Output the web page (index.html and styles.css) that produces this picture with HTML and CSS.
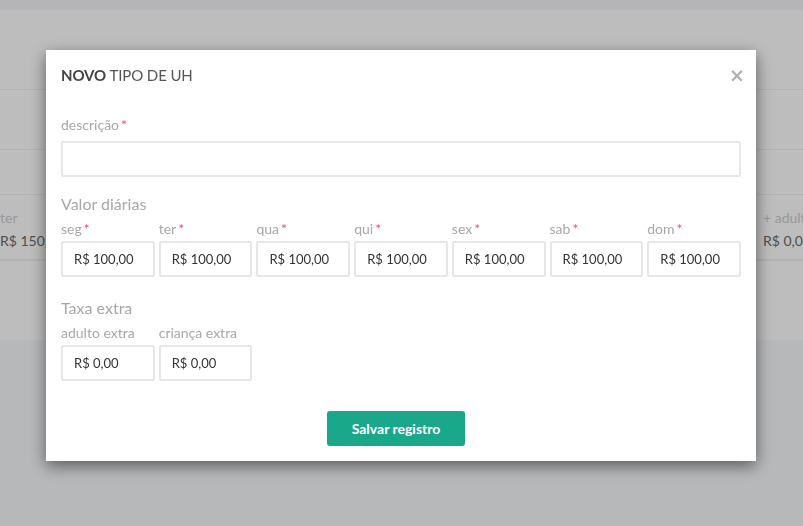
FILE: index.html
```html
<!DOCTYPE html>
<html lang="pt-BR">

<head>
    <meta charset="UTF-8">
    <meta name="viewport" content="width=device-width, initial-scale=1.0">
    <title>Tipos de UH</title>
    <link rel="stylesheet" href="styles.css">
</head>

<body>
    <div class="topbar"></div>
    <div class="page">
        <div class="row row-a"></div>
        <div class="row row-b"></div>
        <div class="row row-c"></div>
        <div class="row row-prices">
            <div class="cell">
                <span class="cell-label">ter</span>
                <span class="cell-value">R$ 150,00</span>
            </div>
            <div class="cell">
                <span class="cell-label">qua</span>
                <span class="cell-value">R$ 150,00</span>
            </div>
            <div class="cell">
                <span class="cell-label">qui</span>
                <span class="cell-value">R$ 150,00</span>
            </div>
            <div class="cell">
                <span class="cell-label">sex</span>
                <span class="cell-value">R$ 150,00</span>
            </div>
            <div class="cell">
                <span class="cell-label">sab</span>
                <span class="cell-value">R$ 150,00</span>
            </div>
            <div class="cell">
                <span class="cell-label">dom</span>
                <span class="cell-value">R$ 150,00</span>
            </div>
            <div class="cell">
                <span class="cell-label">+ adulto</span>
                <span class="cell-value">R$ 0,00</span>
            </div>
        </div>
        <div class="row row-d"></div>
    </div>

    <div class="backdrop"></div>

    <div class="modal">
        <div class="modal-header">
            <h4 class="modal-title"><b>NOVO</b> TIPO DE UH</h4>
            <button class="close">&times;</button>
        </div>
        <div class="modal-body">
            <div class="field">
                <label>descrição<span class="req">*</span></label>
                <input type="text" class="input">
            </div>

            <h5 class="section">Valor diárias</h5>
            <div class="days">
                <div class="field">
                    <label>seg<span class="req">*</span></label>
                    <input type="text" class="input" value="R$ 100,00">
                </div>
                <div class="field">
                    <label>ter<span class="req">*</span></label>
                    <input type="text" class="input" value="R$ 100,00">
                </div>
                <div class="field">
                    <label>qua<span class="req">*</span></label>
                    <input type="text" class="input" value="R$ 100,00">
                </div>
                <div class="field">
                    <label>qui<span class="req">*</span></label>
                    <input type="text" class="input" value="R$ 100,00">
                </div>
                <div class="field">
                    <label>sex<span class="req">*</span></label>
                    <input type="text" class="input" value="R$ 100,00">
                </div>
                <div class="field">
                    <label>sab<span class="req">*</span></label>
                    <input type="text" class="input" value="R$ 100,00">
                </div>
                <div class="field">
                    <label>dom<span class="req">*</span></label>
                    <input type="text" class="input" value="R$ 100,00">
                </div>
            </div>

            <h5 class="section section-extra">Taxa extra</h5>
            <div class="days">
                <div class="field">
                    <label>adulto extra</label>
                    <input type="text" class="input" value="R$ 0,00">
                </div>
                <div class="field">
                    <label>criança extra</label>
                    <input type="text" class="input" value="R$ 0,00">
                </div>
            </div>

            <div class="actions">
                <button class="btn-save">Salvar registro</button>
            </div>
        </div>
    </div>
</body>

</html>
```

FILE: styles.css
```css
* {
    margin: 0;
    padding: 0;
    box-sizing: border-box;
}

body {
    background-color: #f7f8fa;
    font-family: Lato, "Liberation Sans", sans-serif;
    overflow: hidden;
    height: 526px;
}

/* page behind the modal */
.topbar {
    height: 10px;
    background-color: #f4f5f8;
}

.page {
    background-color: #fff;
    height: 330px;
    overflow: hidden;
}

.row {
    border-bottom: 1px solid #f1f1f2;
}

.row-a {
    height: 80px;
}

.row-b {
    height: 60px;
}

.row-c {
    height: 45px;
}

.row-prices {
    height: 65px;
    display: flex;
    overflow: hidden;
}

.cell {
    flex: 0 0 127px;
    padding-top: 14px;
    display: flex;
    flex-direction: column;
    gap: 6px;
    font-size: 14px;
    white-space: nowrap;
}

.cell:last-child {
    padding-left: 1px;
}

.cell-label {
    color: #cdcdcd;
}

.cell-value {
    color: #6a6a6a;
}

.backdrop {
    position: fixed;
    inset: 0;
    background-color: rgba(0, 0, 0, 0.26);
}

/* modal */
.modal {
    position: fixed;
    top: 50px;
    left: 46px;
    width: 710px;
    background-color: #fff;
    box-shadow: 0 5px 15px rgba(0, 0, 0, 0.5);
}

.modal-header {
    display: flex;
    justify-content: space-between;
    align-items: center;
    padding: 15px;
    height: 50px;
}

.modal-title {
    font-size: 15px;
    font-weight: 400;
    color: #555;
    line-height: 20px;
    letter-spacing: -0.1px;
}

.modal-title b {
    font-weight: 700;
    color: #444;
}

.close {
    border: none;
    background: none;
    font-family: "DejaVu Sans", sans-serif;
    font-size: 19px;
    font-weight: 700;
    color: #b0b0b0;
    line-height: 1;
    margin-right: -4px;
    cursor: pointer;
}

.modal-body {
    padding: 15px;
}

.field {
    display: flex;
    flex-direction: column;
}

.field label {
    font-size: 14px;
    line-height: 20px;
    color: #a7a7a7;
    margin-bottom: 6px;
}

.req {
    color: #f0506e;
    margin-left: 2px;
}

.input {
    height: 36px;
    width: 100%;
    border: 2px solid #e6e6e6;
    border-radius: 2px;
    padding: 0 11px;
    font-family: Lato, "Liberation Sans", sans-serif;
    font-size: 13px;
    color: #333;
    outline: none;
}

.section {
    font-size: 16px;
    font-weight: 400;
    line-height: 22px;
    color: #a7a7a7;
    margin-top: 16px;
    margin-bottom: 4px;
}

.section-extra {
    margin-top: 20px;
}

.days {
    display: grid;
    grid-template-columns: repeat(7, 1fr);
    gap: 4px;
}

.days .field label {
    margin-bottom: 2px;
}

.actions {
    display: flex;
    justify-content: center;
    margin-top: 30px;
}

.btn-save {
    width: 138px;
    height: 35px;
    margin-right: 10px;
    border: none;
    border-radius: 3px;
    background-color: #19a889;
    color: #fff;
    font-family: Lato, "Liberation Sans", sans-serif;
    font-size: 14px;
    font-weight: 700;
    cursor: pointer;
}
```
